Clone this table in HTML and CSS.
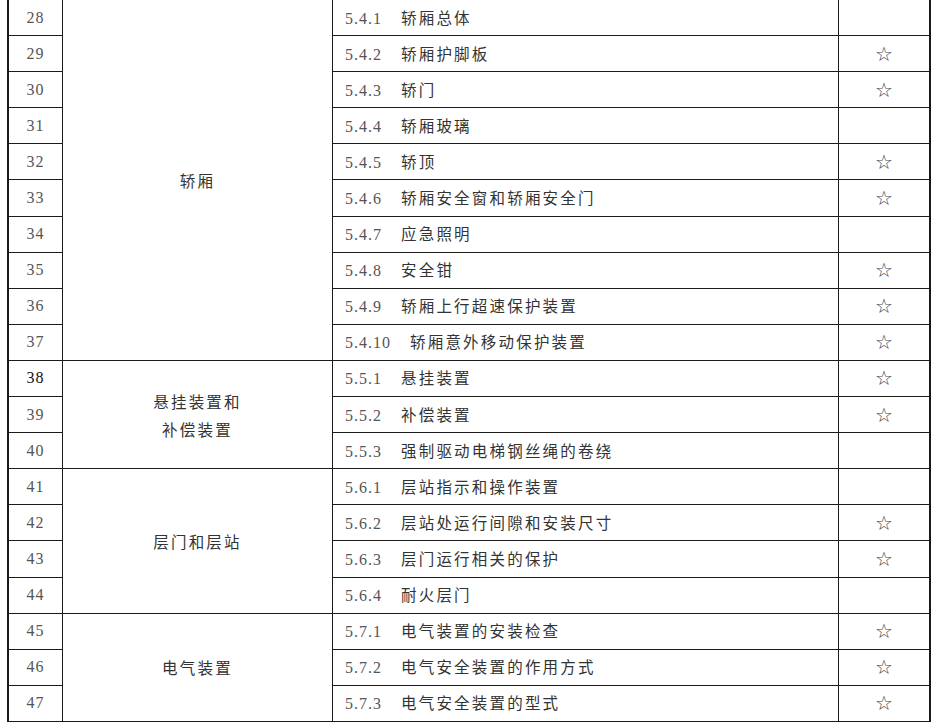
FILE: index.html
```html
<!DOCTYPE html>
<html lang="zh">
<head>
<meta charset="utf-8">
<title>检验项目</title>
<link rel="stylesheet" href="styles.css">
</head>
<body>
<table class="items">
  <colgroup>
    <col class="c-no">
    <col class="c-group">
    <col class="c-item">
    <col class="c-mark">
  </colgroup>
  <tbody>
    <tr><td class="no">28</td><td class="group" rowspan="10">轿厢</td><td class="item"><span class="code">5.4.1</span>轿厢总体</td><td class="mark"></td></tr>
    <tr><td class="no">29</td><td class="item"><span class="code">5.4.2</span>轿厢护脚板</td><td class="mark">☆</td></tr>
    <tr><td class="no">30</td><td class="item"><span class="code">5.4.3</span>轿门</td><td class="mark">☆</td></tr>
    <tr><td class="no">31</td><td class="item"><span class="code">5.4.4</span>轿厢玻璃</td><td class="mark"></td></tr>
    <tr><td class="no">32</td><td class="item"><span class="code">5.4.5</span>轿顶</td><td class="mark">☆</td></tr>
    <tr><td class="no">33</td><td class="item"><span class="code">5.4.6</span>轿厢安全窗和轿厢安全门</td><td class="mark">☆</td></tr>
    <tr><td class="no">34</td><td class="item"><span class="code">5.4.7</span>应急照明</td><td class="mark"></td></tr>
    <tr><td class="no">35</td><td class="item"><span class="code">5.4.8</span>安全钳</td><td class="mark">☆</td></tr>
    <tr><td class="no">36</td><td class="item"><span class="code">5.4.9</span>轿厢上行超速保护装置</td><td class="mark">☆</td></tr>
    <tr><td class="no">37</td><td class="item"><span class="code">5.4.10</span>轿厢意外移动保护装置</td><td class="mark">☆</td></tr>
    <tr><td class="no dark">38</td><td class="group" rowspan="3">悬挂装置和<br>补偿装置</td><td class="item"><span class="code">5.5.1</span>悬挂装置</td><td class="mark">☆</td></tr>
    <tr><td class="no">39</td><td class="item"><span class="code">5.5.2</span>补偿装置</td><td class="mark">☆</td></tr>
    <tr><td class="no">40</td><td class="item"><span class="code">5.5.3</span>强制驱动电梯钢丝绳的卷绕</td><td class="mark"></td></tr>
    <tr><td class="no">41</td><td class="group" rowspan="4">层门和层站</td><td class="item"><span class="code">5.6.1</span>层站指示和操作装置</td><td class="mark"></td></tr>
    <tr><td class="no">42</td><td class="item"><span class="code">5.6.2</span>层站处运行间隙和安装尺寸</td><td class="mark">☆</td></tr>
    <tr><td class="no">43</td><td class="item"><span class="code">5.6.3</span>层门运行相关的保护</td><td class="mark">☆</td></tr>
    <tr><td class="no">44</td><td class="item"><span class="code">5.6.4</span>耐火层门</td><td class="mark"></td></tr>
    <tr><td class="no">45</td><td class="group" rowspan="3">电气装置</td><td class="item"><span class="code">5.7.1</span>电气装置的安装检查</td><td class="mark">☆</td></tr>
    <tr><td class="no">46</td><td class="item"><span class="code">5.7.2</span>电气安全装置的作用方式</td><td class="mark">☆</td></tr>
    <tr><td class="no">47</td><td class="item"><span class="code">5.7.3</span>电气安全装置的型式</td><td class="mark">☆</td></tr>
  </tbody>
</table>
</body>
</html>
```

FILE: styles.css
```css
html, body {
  margin: 0;
  padding: 0;
  background: #ffffff;
}

body {
  font-family: "Noto Sans CJK SC", "Liberation Serif", serif;
  color: #333333;
}

.items {
  margin-left: 7px;
  width: 924px;
  table-layout: fixed;
  border-collapse: separate;
  border-spacing: 0;
  border-left: 2px solid #1a1a1a;
  border-right: 2px solid #1a1a1a;
}

.c-no { width: 54px; }
.c-group { width: 270px; }
.c-item { width: 506px; }
.c-mark { width: 90px; }

.items td {
  box-sizing: border-box;
  height: 36.1px;
  padding: 0;
  border-bottom: 1px solid #1a1a1a;
  border-right: 1px solid #1a1a1a;
  vertical-align: middle;
  white-space: nowrap;
  line-height: 20px;
}

.items td.mark {
  border-right: none;
  text-align: center;
  font-family: "DejaVu Sans", sans-serif;
  font-size: 20px;
  color: #444444;
}

.no {
  text-align: center;
  font-family: "Liberation Serif", serif;
  font-size: 16px;
  letter-spacing: 1px;
  color: #555555;
}

.no.dark {
  color: #111111;
}

.items td.group {
  text-align: center;
  font-size: 15.5px;
  letter-spacing: 2.2px;
  line-height: 28px;
}

.items td.item {
  padding-left: 12px;
  font-size: 15.5px;
  letter-spacing: 2.2px;
}

.code {
  display: inline-block;
  margin-right: 19px;
  font-family: "Liberation Serif", serif;
  font-size: 16px;
  letter-spacing: 1px;
  color: #555555;
}
```
